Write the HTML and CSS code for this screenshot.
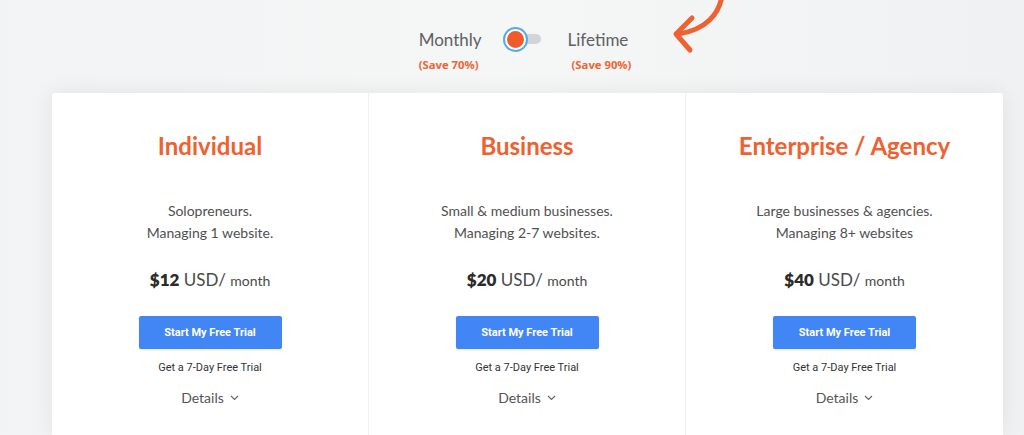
FILE: index.html
```html
<!DOCTYPE html>
<html>
<head>
<meta charset="utf-8">
<link rel="stylesheet" href="styles.css">
</head>
<body>
<div class="page">
  <header class="switcher">
    <div class="opt">
      <span class="opt-label">Monthly</span>
      <span class="save">(Save 70%)</span>
    </div>
    <div class="toggle"><span class="track"></span><span class="knob"></span></div>
    <div class="opt opt-right">
      <span class="opt-label">Lifetime</span>
      <span class="save save-right">(Save 90%)</span>
    </div>
    <svg class="arrow" width="70" height="60" viewBox="0 0 70 60">
      <path d="M62 -4 C 59 14, 46 30, 18 34" fill="none" stroke="#ee6130" stroke-width="5" stroke-linecap="round"/>
      <path d="M32 18 L 16 34 L 30 50" fill="none" stroke="#ee6130" stroke-width="5" stroke-linecap="round" stroke-linejoin="round"/>
    </svg>
  </header>
  <main class="plans">
    <section class="plan">
      <h2 class="plan-title">Individual</h2>
      <p class="plan-desc">Solopreneurs.<br>Managing 1 website.</p>
      <p class="price"><b>$12</b> USD/ <span class="per">month</span></p>
      <a class="cta">Start My Free Trial</a>
      <p class="trial">Get a 7-Day Free Trial</p>
      <p class="details">Details <span class="chev"><svg width="9" height="6" viewBox="0 0 9 6"><path d="M1 1 L4.5 4.5 L8 1" fill="none" stroke="#666" stroke-width="1.2"/></svg></span></p>
    </section>
    <section class="plan">
      <h2 class="plan-title">Business</h2>
      <p class="plan-desc">Small &amp; medium businesses.<br>Managing 2-7 websites.</p>
      <p class="price"><b>$20</b> USD/ <span class="per">month</span></p>
      <a class="cta">Start My Free Trial</a>
      <p class="trial">Get a 7-Day Free Trial</p>
      <p class="details">Details <span class="chev"><svg width="9" height="6" viewBox="0 0 9 6"><path d="M1 1 L4.5 4.5 L8 1" fill="none" stroke="#666" stroke-width="1.2"/></svg></span></p>
    </section>
    <section class="plan">
      <h2 class="plan-title">Enterprise / Agency</h2>
      <p class="plan-desc">Large businesses &amp; agencies.<br>Managing 8+ websites</p>
      <p class="price"><b>$40</b> USD/ <span class="per">month</span></p>
      <a class="cta">Start My Free Trial</a>
      <p class="trial">Get a 7-Day Free Trial</p>
      <p class="details">Details <span class="chev"><svg width="9" height="6" viewBox="0 0 9 6"><path d="M1 1 L4.5 4.5 L8 1" fill="none" stroke="#666" stroke-width="1.2"/></svg></span></p>
    </section>
  </main>
</div>
</body>
</html>
```

FILE: styles.css
```css
* { box-sizing: border-box; }
html, body { margin: 0; padding: 0; }
body {
  width: 1024px;
  height: 435px;
  overflow: hidden;
  background: linear-gradient(90deg, #f2f3f4 0%, #f5f6f6 50%, #f0f1f2 100%);
  font-family: Lato, "Open Sans", sans-serif;
}
.page { position: relative; }

.switcher {
  position: relative;
  height: 93px;
  display: flex;
  justify-content: center;
  align-items: flex-start;
  padding-top: 29px;
  padding-left: 26px;
}
.opt { display: flex; flex-direction: column; align-items: flex-start; }
.opt-label {
  font-family: Lato, sans-serif;
  font-size: 17px;
  line-height: 22px;
  color: #606060;
  font-weight: 400;
}
.save {
  margin-top: 7px;
  font-family: "Open Sans", sans-serif;
  font-size: 11.3px;
  font-weight: 700;
  color: #ef6433;
  line-height: 14px;
}
.save-right { margin-left: 4px; }
.toggle {
  position: relative;
  width: 36px;
  height: 22px;
  margin: 0 27px 0 23px;
}
.track {
  position: absolute;
  left: 12px;
  top: 5px;
  width: 24px;
  height: 10px;
  border-radius: 5px;
  background: #d3d4d6;
}
.knob {
  position: absolute;
  left: 0;
  top: 0;
  width: 21px;
  height: 21px;
  border-radius: 50%;
  background: #ef5b2c;
  border: 2px solid #fff;
  box-shadow: 0 0 0 2px #55aaeb;
}
.arrow {
  position: absolute;
  left: 660px;
  top: 0;
}

.plans {
  margin: 0 21px 0 52px;
  height: 342px;
  background: #fff;
  display: grid;
  grid-template-columns: 316px 317px 318px;
  box-shadow: 0 0 22px rgba(0, 0, 0, 0.07);
  border-radius: 3px 3px 0 0;
}
.plan {
  display: flex;
  flex-direction: column;
  align-items: center;
  padding-top: 39px;
  border-left: 1px solid #f0f0f1;
}
.plan:first-child { border-left: none; }
.plan-title {
  margin: 0;
  font-family: Lato, sans-serif;
  font-weight: 700;
  font-size: 24px;
  line-height: 28px;
  color: #ee6130;
}
.plan-desc {
  margin: 40px 0 0;
  text-align: center;
  font-family: Lato, sans-serif;
  font-size: 14px;
  line-height: 22px;
  color: #505050;
}
.price {
  margin: 24px 0 0;
  font-family: Lato, sans-serif;
  font-size: 17px;
  line-height: 24px;
  color: #4a4a4a;
}
.price b { color: #2b2b2b; font-weight: 800; }
.price .per { font-size: 14px; }
.cta {
  margin-top: 23px;
  width: 143px;
  height: 33px;
  display: flex;
  align-items: center;
  justify-content: center;
  background: #4285f4;
  border-radius: 2px;
  color: #fff;
  font-family: Roboto, sans-serif;
  font-weight: 700;
  font-size: 11px;
  box-shadow: 0 1px 2px rgba(0,0,0,0.1);
}
.trial {
  margin: 11px 0 0;
  font-family: Roboto, sans-serif;
  font-size: 11px;
  line-height: 16px;
  color: #333;
}
.details {
  margin: 12px 0 0;
  font-family: Lato, sans-serif;
  font-size: 14px;
  line-height: 20px;
  color: #555;
  display: flex;
  align-items: center;
  gap: 6px;
}
.chev { display: flex; }
```
